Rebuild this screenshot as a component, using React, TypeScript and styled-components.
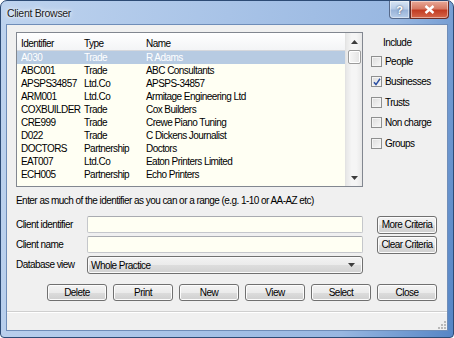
import React from 'react';
import styled, {createGlobalStyle} from 'styled-components';

const GlobalStyle = createGlobalStyle`
  html, body {
    margin: 0;
    padding: 0;
    background: #ffffff;
  }
  body {
    font-family: "Liberation Sans", Arial, sans-serif;
    font-size: 10px;
    letter-spacing: -0.55px;
    color: #000000;
  }
`;

const Window = styled.div`
  width: 454px;
  height: 338px;
  box-sizing: border-box;
  display: flex;
  flex-direction: column;
  border: 1px solid #2d4b75;
  border-radius: 7px 7px 4px 4px;
  padding: 0 5px 6px;
  background: linear-gradient(100deg, #bed3ee 0%, #a8c3e7 45%, #98b7e1 78%, #5585c5 100%);
  overflow: hidden;
`;

const TitleBar = styled.div`
  height: 23px;
  display: flex;
  align-items: flex-start;
  margin-right: -1px;
`;

const Title = styled.div`
  flex: 1;
  padding: 6px 0 0 1px;
  font-size: 10.5px;
  letter-spacing: -0.3px;
  color: #1b1b1b;
  text-shadow: 0 0 6px #ffffff, 0 0 3px #ffffff;
`;

const CaptionButton = styled.div<{ $close?: boolean }>`
  height: 18px;
  width: ${p => (p.$close ? '39px' : '21px')};
  box-sizing: border-box;
  display: flex;
  align-items: center;
  justify-content: center;
  border: 1px solid ${p => (p.$close ? '#6e2b22' : '#56698a')};
  border-top: none;
  border-radius: ${p => (p.$close ? '0 0 4px 0' : '0 0 0 4px')};
  background: ${p =>
    p.$close
      ? 'linear-gradient(#e9a998 0%, #d67a64 45%, #c23c23 55%, #d5674b 100%)'
      : 'linear-gradient(#d8e5f4 0%, #b7cce8 45%, #9ab4d9 55%, #b7cde9 100%)'};
  box-shadow: inset 0 0 0 1px rgba(255, 255, 255, 0.45);
  color: #ffffff;
  font-weight: bold;
  font-size: 11px;
  letter-spacing: 0;
  text-shadow: 0 0 2px #2b3d5a;
`;

const Client = styled.div`
  flex: 1;
  display: flex;
  flex-direction: column;
  background: #f0f0f0;
  border: 1px solid #6f8db8;
`;

const Content = styled.div`
  flex: 1;
  padding: 7px 10px 0 9px;
  display: flex;
  flex-direction: column;
`;

const TopRow = styled.div`
  display: flex;
`;

const ListBox = styled.div`
  width: 347px;
  height: 155px;
  box-sizing: border-box;
  border: 1px solid #828790;
  background: #fffff3;
  display: flex;
`;

const Table = styled.div`
  flex: 1;
  display: flex;
  flex-direction: column;
`;

const Row = styled.div<{ $header?: boolean; $selected?: boolean }>`
  display: grid;
  grid-template-columns: 63px 62px 1fr;
  padding-left: 4px;
  box-sizing: border-box;
  height: ${p => (p.$header ? '18px' : '13px')};
  line-height: ${p => (p.$header ? '12px' : '13px')};
  padding-top: ${p => (p.$header ? '5px' : '0')};
  white-space: nowrap;
  overflow: hidden;
  background: ${p =>
    p.$header ? 'linear-gradient(#ffffff, #f3f4f6)' : p.$selected ? '#b7cbe2' : 'transparent'};
  border-bottom: ${p => (p.$header ? '1px solid #d6d8dc' : 'none')};
  color: ${p => (p.$selected ? '#ffffff' : '#000000')};
`;

const ScrollBar = styled.div`
  width: 16px;
  display: flex;
  flex-direction: column;
  align-items: center;
  background: linear-gradient(to right, #e7e7e7, #f5f5f5 35%, #f5f5f5 65%, #e8e8e8);
  border-left: 1px solid #e3e3e3;
`;

const ArrowCell = styled.div`
  height: 17px;
  width: 16px;
  display: flex;
  align-items: center;
  justify-content: center;
`;

const Thumb = styled.div`
  width: 13px;
  height: 14px;
  box-sizing: border-box;
  border: 1px solid #9b9b9b;
  border-radius: 2px;
  background: linear-gradient(to right, #f7f7f7, #e3e3e3);
  box-shadow: inset 0 0 0 1px #ffffff;
`;

const Track = styled.div`
  flex: 1;
`;

const IncludePanel = styled.div`
  margin-left: 8px;
  padding-top: 5px;
  display: flex;
  flex-direction: column;
`;

const IncludeTitle = styled.div`
  padding-left: 12px;
  height: 14px;
  line-height: 12px;
  margin-bottom: 4px;
`;

const CheckRow = styled.label`
  display: flex;
  align-items: center;
  gap: 3px;
  height: 12px;
  margin-bottom: 8.5px;
  white-space: nowrap;
`;

const Box = styled.span`
  width: 11px;
  height: 11px;
  box-sizing: border-box;
  border: 1px solid #8e8f8f;
  background: linear-gradient(135deg, #dcdcdc, #f8f8f8);
  box-shadow: inset 0 0 0 1px #f4f4f4;
  display: flex;
  align-items: center;
  justify-content: center;
`;

const Hint = styled.div`
  margin-top: 8px;
  line-height: 12px;
  white-space: nowrap;
`;

const Form = styled.div`
  margin-top: 9px;
  display: grid;
  grid-template-columns: 71px 276px 74px;
  grid-template-rows: 17px 17px 18px;
  row-gap: 3px;
  align-items: center;
`;

const FieldLabel = styled.div`
  line-height: 12px;
  white-space: nowrap;
`;

const TextBox = styled.div`
  height: 17px;
  box-sizing: border-box;
  border: 1px solid #c5c7cb;
  border-top-color: #a9abb0;
  border-radius: 2px;
  background: #fffff3;
`;

const Select = styled.div`
  height: 18px;
  box-sizing: border-box;
  border: 1px solid #707070;
  border-radius: 3px;
  background: linear-gradient(#f3f3f3 0%, #ebebeb 50%, #dddddd 51%, #d2d2d2 100%);
  box-shadow: inset 0 0 0 1px #fbfbfb;
  display: flex;
  align-items: center;
  justify-content: space-between;
  padding: 0 7px 0 3px;
`;

const Button = styled.div<{ $tall?: boolean }>`
  height: ${p => (p.$tall ? '18px' : '17px')};
  width: 60px;
  justify-self: end;
  box-sizing: border-box;
  border: 1px solid #707070;
  border-radius: 3px;
  background: linear-gradient(#f3f3f3 0%, #ebebeb 50%, #dddddd 51%, #cfcfcf 100%);
  box-shadow: inset 0 0 0 1px #fcfcfc;
  display: flex;
  align-items: center;
  justify-content: center;
  white-space: nowrap;
`;

const ButtonRow = styled.div`
  margin-top: 10px;
  display: flex;
  justify-content: flex-end;
  gap: 6px;
`;

const StatusBar = styled.div`
  height: 17px;
  border-top: 1px solid #cfcfcf;
  box-shadow: inset 0 1px 0 #ffffff;
  display: flex;
  justify-content: flex-end;
  align-items: flex-end;
  padding: 0 1px 1px 0;
`;

const clients = [
  {id: 'A030', type: 'Trade', name: 'R Adams'},
  {id: 'ABC001', type: 'Trade', name: 'ABC Consultants'},
  {id: 'APSPS34857', type: 'Ltd.Co', name: 'APSPS-34857'},
  {id: 'ARM001', type: 'Ltd.Co', name: 'Armitage Engineering Ltd'},
  {id: 'COXBUILDER', type: 'Trade', name: 'Cox Builders'},
  {id: 'CRE999', type: 'Trade', name: 'Crewe Piano Tuning'},
  {id: 'D022', type: 'Trade', name: 'C Dickens Journalist'},
  {id: 'DOCTORS', type: 'Partnership', name: 'Doctors'},
  {id: 'EAT007', type: 'Ltd.Co', name: 'Eaton Printers Limited'},
  {id: 'ECH005', type: 'Partnership', name: 'Echo Printers'},
];

const includes = [
  {label: 'People', checked: false},
  {label: 'Businesses', checked: true},
  {label: 'Trusts', checked: false},
  {label: 'Non charge', checked: false},
  {label: 'Groups', checked: false},
];

const Arrow = ({down}: { down?: boolean }) => (
  <svg width="7" height="4" viewBox="0 0 7 4">
    <path d={down ? 'M0 0 H7 L3.5 4 Z' : 'M0 4 H7 L3.5 0 Z'} fill="#3c3c3c" />
  </svg>
);

const Grip = () => (
  <svg width="8" height="8" viewBox="0 0 8 8">
    {[[6, 0], [6, 3], [3, 3], [6, 6], [3, 6], [0, 6]].map(([x, y]) => (
      <rect key={`${x}-${y}`} x={x} y={y} width="2" height="2" fill="#b9b9b9" />
    ))}
  </svg>
);

export default function App() {
  return (
    <>
      <GlobalStyle />
      <Window>
        <TitleBar>
          <Title>Client Browser</Title>
          <CaptionButton>?</CaptionButton>
          <CaptionButton $close>
            <svg width="11" height="9" viewBox="0 0 11 9">
              <path d="M1.5 1 L9.5 8 M9.5 1 L1.5 8" stroke="#ffffff" strokeWidth="2.4" />
            </svg>
          </CaptionButton>
        </TitleBar>
        <Client>
          <Content>
            <TopRow>
              <ListBox>
                <Table>
                  <Row $header>
                    <span>Identifier</span>
                    <span>Type</span>
                    <span>Name</span>
                  </Row>
                  {clients.map((c, i) => (
                    <Row key={c.id} $selected={i === 0}>
                      <span>{c.id}</span>
                      <span>{c.type}</span>
                      <span>{c.name}</span>
                    </Row>
                  ))}
                </Table>
                <ScrollBar>
                  <ArrowCell><Arrow /></ArrowCell>
                  <Thumb />
                  <Track />
                  <ArrowCell><Arrow down /></ArrowCell>
                </ScrollBar>
              </ListBox>
              <IncludePanel>
                <IncludeTitle>Include</IncludeTitle>
                {includes.map(item => (
                  <CheckRow key={item.label}>
                    <Box>
                      {item.checked && (
                        <svg width="8" height="8" viewBox="0 0 8 8">
                          <path d="M1 4.2 L3 6.6 L7 0.8" stroke="#2b4fa3" strokeWidth="1.5" fill="none" />
                        </svg>
                      )}
                    </Box>
                    <span>{item.label}</span>
                  </CheckRow>
                ))}
              </IncludePanel>
            </TopRow>
            <Hint>Enter as much of the identifier as you can or a range (e.g. 1-10 or AA-AZ etc)</Hint>
            <Form>
              <FieldLabel>Client identifier</FieldLabel>
              <TextBox />
              <Button $tall>More Criteria</Button>
              <FieldLabel>Client name</FieldLabel>
              <TextBox />
              <Button $tall>Clear Criteria</Button>
              <FieldLabel>Database view</FieldLabel>
              <Select>
                <span>Whole Practice</span>
                <Arrow down />
              </Select>
            </Form>
            <ButtonRow>
              {['Delete', 'Print', 'New', 'View', 'Select', 'Close'].map(label => (
                <Button key={label}>{label}</Button>
              ))}
            </ButtonRow>
          </Content>
          <StatusBar>
            <Grip />
          </StatusBar>
        </Client>
      </Window>
    </>
  );
}
